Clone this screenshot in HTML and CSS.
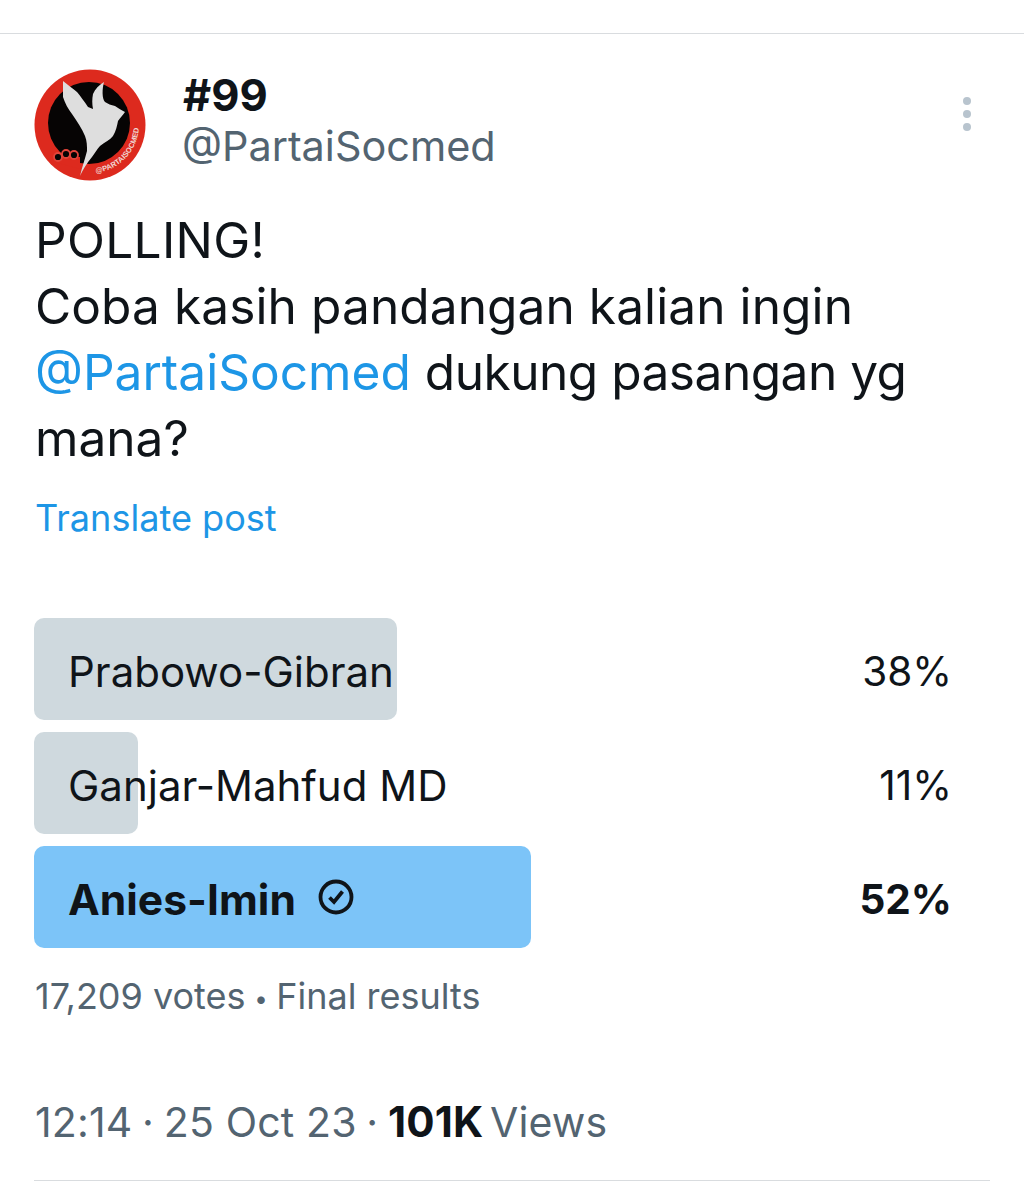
FILE: index.html
```html
<!DOCTYPE html>
<html lang="en">
<head>
    <meta charset="UTF-8">
    <title>Post</title>
    <link rel="stylesheet" href="styles.css">
</head>
<body>
    <div class="topline"></div>
    <div class="post">
        <div class="header">
            <svg class="avatar" viewBox="0 0 112 112">
                <circle cx="56" cy="56" r="55.5" fill="#dd2a1e"/>
                <circle cx="55" cy="54" r="41" fill="#060404"/>
                <path d="M18 88 L46 88 L46 100 L24 94 Z" fill="#dd2a1e"/>
                <g fill="#060404" stroke="#e2443a" stroke-width="1.8">
                    <circle cx="24" cy="88" r="4"/>
                    <circle cx="32" cy="85" r="4"/>
                    <circle cx="40" cy="86" r="4"/>
                </g>
                <path d="M29 12 C29 20 29 24 29 28 C31 34 34 40 38 45 C43 52 48 60 51 67 C53 72 53 77 53 82 C51 90 48 98 46 107 C49 100 53 94 58 88 C61 84 63 80 66 77 C71 73 76 71 79 67 C82 62 83 57 84 52 C86 49 89 46 91 43 C87 41 84 39 81 37 C77 36 74 35 71 33 C68 30 68 20 70 13 C65 16 61 20 59 25 C58 30 58 35 59 40 L54 38 C50 32 47 28 43 23 C38 19 33 15 29 12 Z" fill="#dedede"/>
                <defs><path id="rim" d="M62 104 A 49 49 0 0 0 105 55"/></defs>
                <text class="avatar-tag"><textPath href="#rim">@PARTAISOCMED</textPath></text>
            </svg>
            <div class="names">
                <div class="name">#99</div>
                <div class="handle">@PartaiSocmed</div>
            </div>
            <div class="more"><span></span><span></span><span></span></div>
        </div>
        <p class="text"><span class="first">POLLING!</span><br><span class="second">Coba kasih pandangan kalian ingin</span><br><a href="#">@PartaiSocmed</a> <span class="third">dukung pasangan yg</span><br>mana?</p>
        <a class="translate" href="#">Translate post</a>
        <div class="poll">
            <div class="row">
                <div class="bar bar-38"></div>
                <span class="label">Prabowo-Gibran</span>
                <span class="pct">38%</span>
            </div>
            <div class="row">
                <div class="bar bar-11"></div>
                <span class="label">Ganjar-Mahfud MD</span>
                <span class="pct">11%</span>
            </div>
            <div class="row winner">
                <div class="bar bar-52"></div>
                <span class="label">Anies-Imin
                    <svg class="check" viewBox="0 0 36 36">
                        <circle cx="18" cy="18" r="15.5" fill="none" stroke="#0f1419" stroke-width="3.8"/>
                        <path d="M11.5 18.5 L16 23 L24.5 12.5" fill="none" stroke="#0f1419" stroke-width="3.8"/>
                    </svg>
                </span>
                <span class="pct">52%</span>
            </div>
        </div>
        <div class="votes">17,209 votes <span class="bullet">•</span> Final results</div>
        <div class="meta">12:14 <span class="sep">·</span> 25 Oct 23 <span class="sep">·</span> <strong>101K</strong> Views</div>
    </div>
</body>
</html>
```

FILE: styles.css
```css
body {
    margin: 0;
    background-color: #fff;
    color: #0f1419;
    font-family: Inter, sans-serif;
}
.topline {
    height: 33px;
    border-bottom: 1px solid #d9dcdf;
}
.post {
    margin: 0 34px;
    height: 1147px;
    box-sizing: border-box;
    padding-top: 35px;
    border-bottom: 1px solid #d9dcdf;
}
.header {
    display: flex;
    height: 112px;
}
.avatar {
    width: 112px;
    height: 112px;
}
.avatar-tag {
    font-family: "Liberation Sans", sans-serif;
    font-size: 7.5px;
    font-weight: bold;
    fill: #f0d8d4;
}
.names {
    margin-left: 37px;
    flex: 1;
}
.name {
    font-size: 43.5px;
    font-weight: 700;
    line-height: 52px;
}
.handle {
    font-size: 41.4px;
    line-height: 50px;
    margin-left: -1px;
    color: #536471;
}
.more {
    display: flex;
    flex-direction: column;
    gap: 5px;
    margin: 28px 19px 0 0;
}
.more span {
    width: 8px;
    height: 8px;
    border-radius: 50%;
    background-color: #b8c4ce;
}
.text {
    margin: 26px 0 0 1px;
    font-size: 49.6px;
    line-height: 66px;
}
.first {
    letter-spacing: 0.3px;
}
.second {
    letter-spacing: 0.08px;
}
.third {
    letter-spacing: -0.5px;
}
.text a {
    color: #1d96e6;
    text-decoration: none;
}
.translate {
    display: block;
    margin: 23px 0 0 1px;
    color: #1d96e6;
    font-size: 36.1px;
    line-height: 48px;
    text-decoration: none;
}
.poll {
    margin-top: 76px;
    display: flex;
    flex-direction: column;
    gap: 12px;
}
.row {
    position: relative;
    display: flex;
    justify-content: space-between;
    align-items: center;
    height: 102px;
    box-sizing: border-box;
    padding: 4px 38px 0 34px;
    font-size: 42px;
}
.bar {
    position: absolute;
    left: 0;
    top: 0;
    bottom: 0;
    border-radius: 10px;
    background-color: #cfd9de;
}
.bar-38 { width: 363px; }
.bar-11 { width: 104px; }
.bar-52 { width: 497px; background-color: #7cc4f8; }
.label, .pct {
    position: relative;
}
.pct {
    font-size: 40.5px;
}
.winner {
    font-weight: 700;
    font-size: 42.6px;
}
.check {
    width: 36px;
    height: 36px;
    margin-left: 12px;
    vertical-align: 0;
}
.votes {
    margin: 24px 0 0 1px;
    font-size: 36px;
    line-height: 48px;
    color: #536471;
}
.bullet {
    font-size: 24px;
    margin: 0 -1.5px;
    vertical-align: 2px;
}
.meta {
    margin: 75px 0 0 1px;
    font-size: 41px;
    line-height: 48px;
    letter-spacing: 0.15px;
    color: #536471;
}
.sep {
    margin: 0 -2px;
}
.meta strong {
    color: #0f1419;
    font-size: 42px;
    font-weight: 700;
    margin-right: -5px;
}
```
